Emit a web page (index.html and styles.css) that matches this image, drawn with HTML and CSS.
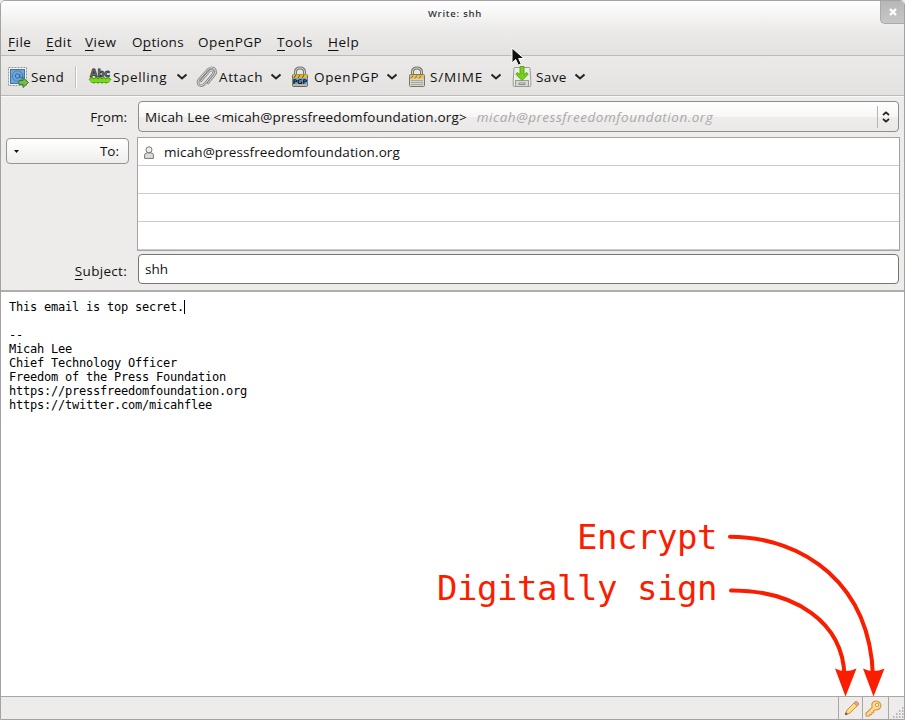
FILE: index.html
```html
<!DOCTYPE html>
<html lang="en">
<head>
<meta charset="utf-8">
<title>Write: shh</title>
<link rel="stylesheet" href="styles.css">
</head>
<body>
<div class="window">
  <header class="chrome">
    <div class="titlebar">
      <span class="title">Write: shh</span>
      <button class="close" aria-label="Close"><svg width="8" height="8" viewBox="0 0 8 8"><path d="M1 1l6 6M7 1l-6 6" stroke="#fff" stroke-width="2.4"/></svg></button>
    </div>
    <nav class="menubar">
      <span class="m-file"><u>F</u>ile</span>
      <span class="m-edit"><u>E</u>dit</span>
      <span class="m-view"><u>V</u>iew</span>
      <span class="m-options">O<u>p</u>tions</span>
      <span class="m-pgp">Ope<u>n</u>PGP</span>
      <span class="m-tools"><u>T</u>ools</span>
      <span class="m-help"><u>H</u>elp</span>
    </nav>
  </header>

  <div class="toolbar">
    <div class="tool t-send">
      <svg class="ico" width="22" height="22" viewBox="0 0 22 22">
        <rect x="1.500" y="1.500" width="18" height="18" fill="#f4f4f1" stroke="#96968f" stroke-dasharray="2 1"/>
        <rect x="3.500" y="3.500" width="14" height="14" fill="#6da5d8" stroke="#3c77b4"/>
        <circle cx="10.500" cy="10" r="5.200" fill="#6fa6da" stroke="#477fb8"/>
        <circle cx="10.500" cy="10" r="2.200" fill="none" stroke="#2f69a6"/>
        <path d="M12.800 8v3.200q1.500 1.500 2.500-.7" fill="none" stroke="#2f69a6"/>
        <path d="M12 14.500h4v-3l5.500 5-5.500 5v-3h-4z" fill="#75bd4c" stroke="#397b25"/>
      </svg>
      <span>Send</span>
    </div>
    <i class="sep"></i>
    <div class="tool t-spell">
      <svg class="ico" width="22" height="22" viewBox="0 0 22 22">
        <text x="1" y="10.500" textLength="20" lengthAdjust="spacingAndGlyphs" class="abc">Abc</text>
        <path d="M1 15l2-1.500 2 1.500 2-1.500 2 1.500 2-1.500 2 1.500 2-1.500 2 1.500 2-1.500 2 1.500" fill="none" stroke="#4e9a06" stroke-width="4.500"/>
        <path d="M1 15l2-1.500 2 1.500 2-1.500 2 1.500 2-1.500 2 1.500 2-1.500 2 1.500 2-1.500 2 1.500" fill="none" stroke="#76d820" stroke-width="2.400"/>
      </svg>
      <span>Spelling</span>
      <svg class="chev" width="12" height="8" viewBox="0 0 12 8"><path d="M1.500 1.500L6 5.500l4.500-4" fill="none" stroke="#222" stroke-width="2"/></svg>
    </div>
    <div class="tool t-attach">
      <svg class="ico" width="22" height="22" viewBox="0 0 22 22">
        <g fill="none" stroke-linecap="round" stroke-linejoin="round">
          <path d="M5 15L13 5.500q2-2 3.700-.6 1.500 1.500 0 3.500L8.500 18q-3 2.800-5.500.8Q.8 16.500 3 13.500L11.500 4q3.500-3.800 6.800-1.500 3 3 .2 6.500L12 17" stroke="#858585" stroke-width="2.400"/>
          <path d="M5 15L13 5.500q2-2 3.700-.6 1.500 1.500 0 3.500L8.500 18q-3 2.800-5.500.8Q.8 16.500 3 13.500L11.500 4q3.500-3.800 6.800-1.500 3 3 .2 6.500L12 17" stroke="#dcdcda" stroke-width="1"/>
        </g>
      </svg>
      <span>Attach</span>
      <svg class="chev" width="12" height="8" viewBox="0 0 12 8"><path d="M1.500 1.500L6 5.500l4.500-4" fill="none" stroke="#222" stroke-width="2"/></svg>
    </div>
    <div class="tool t-pgp">
      <svg class="ico" width="18" height="22" viewBox="0 0 18 22">
        <path d="M4.500 10V6q0-4 4.500-4t4.500 4v4" fill="none" stroke="#777974" stroke-width="3"/>
        <path d="M4.500 10V6q0-4 4.500-4t4.500 4v4" fill="none" stroke="#d0d1cd" stroke-width="1"/>
        <rect x="1.500" y="8.500" width="15" height="12" rx="1" fill="#b9b9a8" stroke="#6a6a60"/>
        <rect x="2" y="8.500" width="14" height="3.500" fill="#eeb932"/>
        <path d="M3 12l2-3M7 12l2-3M11 12l2-3" stroke="#5f4b17"/>
        <rect x="1.500" y="12" width="15" height="6" fill="#6fa8d8"/>
        <text x="1.700" y="17.700" textLength="14.600" lengthAdjust="spacingAndGlyphs" class="pgp">PGP</text>
      </svg>
      <span>OpenPGP</span>
      <svg class="chev" width="12" height="8" viewBox="0 0 12 8"><path d="M1.500 1.500L6 5.500l4.500-4" fill="none" stroke="#222" stroke-width="2"/></svg>
    </div>
    <div class="tool t-smime">
      <svg class="ico" width="18" height="22" viewBox="0 0 18 22">
        <path d="M4.500 10V6q0-4 4.500-4t4.500 4v4" fill="none" stroke="#777974" stroke-width="3"/>
        <path d="M4.500 10V6q0-4 4.500-4t4.500 4v4" fill="none" stroke="#d0d1cd" stroke-width="1"/>
        <rect x="1.500" y="8.500" width="15" height="12" rx="1" fill="#d4d4cc" stroke="#77776c"/>
        <rect x="2" y="9" width="14" height="3.500" fill="#edbd4b"/>
        <path d="M3 12.500l2-3M7 12.500l2-3M11 12.500l2-3" stroke="#8b7132"/>
        <path d="M3 14.500h12M3 16.500h12M3 18.500h12" stroke="#aaaaa0"/>
      </svg>
      <span>S/MIME</span>
      <svg class="chev" width="12" height="8" viewBox="0 0 12 8"><path d="M1.500 1.500L6 5.500l4.500-4" fill="none" stroke="#222" stroke-width="2"/></svg>
    </div>
    <div class="tool t-save">
      <svg class="ico" width="20" height="22" viewBox="0 0 20 22">
        <path d="M3 1.500h14q1 0 1 1l.8 12v5q0 1-1 1H2.200q-1 0-1-1v-5l.8-12q0-1 1-1z" fill="#ecece9" stroke="#999995"/>
        <rect x="3.500" y="14.500" width="13" height="6" fill="#d7d8d4" stroke="#999995"/>
        <path d="M7 18.500v-1.500h6v1.500z" fill="#fff" stroke="#888a85"/>
        <path d="M8 .5h4v8l2.800-2 1.200 2-6 6-6-6 1.200-2L8 8.500z" fill="#73d216" stroke="#4e9a06" stroke-width=".8"/>
      </svg>
      <span>Save</span>
      <svg class="chev" width="12" height="8" viewBox="0 0 12 8"><path d="M1.500 1.500L6 5.500l4.500-4" fill="none" stroke="#222" stroke-width="2"/></svg>
    </div>
  </div>

  <section class="headers">
    <label class="lbl l-from">F<u>r</u>om:</label>
    <div class="combo">
      <span class="identity">Micah Lee &lt;micah@pressfreedomfoundation.org&gt;</span>
      <em>micah@pressfreedomfoundation.org</em>
      <span class="spin"><svg width="8" height="12" viewBox="0 0 8 12"><path d="M1 4l3-2.700L7 4M1 8l3 2.700L7 8" fill="none" stroke="#222" stroke-width="1.700"/></svg></span>
    </div>
    <button class="to"><svg width="5" height="3" viewBox="0 0 5 3"><path d="M0 0h5L2.500 3z" fill="#111"/></svg><span>To:</span></button>
    <div class="recipients">
      <div class="row">
        <svg width="10" height="13" viewBox="0 0 10 13"><path d="M.6 12.400V9Q.6 7.300 3 6.800h4q2.400.5 2.400 2.200v3.400z" fill="#deded9" stroke="#777"/><circle cx="5" cy="3.800" r="3" fill="#eeeeea" stroke="#777"/></svg>
        <span>micah@pressfreedomfoundation.org</span>
      </div>
      <div class="row"></div>
      <div class="row"></div>
      <div class="row"></div>
    </div>
    <label class="lbl l-subject"><u>S</u>ubject:</label>
    <div class="subject"><span>shh</span></div>
  </section>

  <main class="editor"><pre>This email is top secret.<i class="caret"></i>

--
Micah Lee
Chief Technology Officer
Freedom of the Press Foundation
https://pressfreedomfoundation.org
https://twitter.com/micahflee</pre></main>

  <footer class="status">
    <span class="cell"><svg width="16" height="16" viewBox="0 0 16 16"><path d="M1.500 14.500l1.300-4.300L11 2q1.200-1 2.700.4T14 5.200L5.700 13.300z" fill="#fbd77c" stroke="#d2923c"/><path d="M3.800 11.500L12 3.500" stroke="#fff0b5"/><path d="M11 2q1.200-1 2.700.4T14 5.200l-1 1L10 3z" fill="#e5a78a" stroke="#b98464" stroke-width=".7"/><path d="M1 15l.8-2.800 2 2z" fill="#55402c"/></svg></span>
    <span class="cell key"><svg width="17" height="17" viewBox="0 0 17 17"><path d="M7.300 7.200Q6 3.800 8.200 2q2.700-2 5.800 0 2.800 2.500 1.400 5.600-2 3-5.400 2.200L8.500 11.200l.2 1.300-1.800.2-.2 1.700-1.800.2-.5 1.300-3 .3-.6-2.700z" fill="#fbdd90" stroke="#dc9144" stroke-width="1.100"/><circle cx="12" cy="5" r="1.600" fill="#fff" stroke="#dc9144"/></svg></span>
    <span class="grip"><svg width="12" height="12" viewBox="0 0 12 12"><path d="M10 1h1.500M7 4h1.500M10 4h1.500M4 7h1.500M7 7h1.500M10 7h1.500M1 10h1.500M4 10h1.500M7 10h1.500M10 10h1.500" stroke="#a5a4a2" stroke-width="1.500"/></svg></span>
  </footer>

  <div class="note n-encrypt">Encrypt</div>
  <div class="note n-sign">Digitally sign</div>
  <svg class="arrows" width="185" height="180" viewBox="720 520 185 180">
    <g fill="none" stroke="#f91e00" stroke-width="4" stroke-linecap="round">
      <path d="M730 536.700C805 537 870 585 873 676"/>
      <path d="M731 590.500C795 590 843 622 844.500 676"/>
    </g>
    <path d="M835 668.500q10.500 5 21.500 0L845.500 696.500z M863 668.500q10.500 5 21.500 0L873.500 696.500z" fill="#f91e00"/>
  </svg>
  <svg class="pointer" width="14" height="20" viewBox="0 0 14 20"><path d="M1 1v15l3.700-3.500 2.500 5.700 3-1.300-2.500-5.400H13z" fill="#111" stroke="#fff" stroke-width="1"/></svg>
</div>
</body>
</html>
```

FILE: styles.css
```css
* { box-sizing: border-box; }
body {
  margin: 0;
  font: 13.5px/20px "Open Sans", "Noto Sans", sans-serif;
  color: #111;
  background: #edecea;
}
u { text-decoration: underline; text-underline-offset: 3px; text-decoration-thickness: 1px; text-decoration-skip-ink: none; }
button { font: inherit; color: inherit; padding: 0; }
svg { display: block; flex: none; }
.window {
  position: relative;
  display: flex;
  flex-direction: column;
  width: 905px;
  height: 720px;
  border: 1px solid #a3a3a3;
  border-radius: 5px 5px 0 0;
  overflow: hidden;
  background: #edecea;
}
.chrome {
  height: 55px;
  flex: none;
  border-bottom: 1px solid #bdbbb8;
  background: linear-gradient(#fff, #ecebea 28px, #e3e2e0);
}
.titlebar { height: 28px; display: flex; justify-content: center; position: relative; padding-left: 5px; }
.title { font: 600 9.5px/25px "Open Sans", sans-serif; color: #34383c; letter-spacing: .75px; }
.close {
  position: absolute; right: 0; top: 0;
  width: 24px; height: 23px;
  display: grid; place-items: center;
  border: solid #aaa; border-width: 0 0 1px 1px;
  border-radius: 0 0 0 5px;
  background: linear-gradient(#b7b7b7, #c7c7c7);
}
.menubar { display: flex; padding-left: 7px; line-height: 27px; white-space: nowrap; letter-spacing: .5px; }
.menubar span { flex: none; }
.m-file { width: 38px; } .m-edit { width: 39px; } .m-view { width: 47px; }
.m-options { width: 66px; letter-spacing: .3px; } .m-pgp { width: 79px; } .m-tools { width: 51px; }

.toolbar {
  display: flex; align-items: center;
  height: 40px; flex: none;
  padding: 2px 0 0 6px;
  border-bottom: 1px solid #bcbab7;
  background: linear-gradient(#ebeae8, #e3e2e0);
}
.tool { display: flex; align-items: center; flex: none; white-space: nowrap; letter-spacing: .65px; }
.ico { margin-right: 2px; overflow: visible; }
.tool .chev { margin-left: auto; }
.t-send { width: 68px; letter-spacing: .4px; }
.sep { width: 2px; height: 22px; margin-right: 12px; border-left: 1px solid #c4c2bf; border-right: 1px solid #fff; }
.t-spell { width: 99px; margin-right: 8px; }
.t-attach { width: 86px; margin-right: 9px; letter-spacing: .6px; }
.t-attach .ico { margin-right: 1px; }
.t-pgp { width: 107px; margin-right: 10px; }
.t-smime { width: 94px; margin-right: 10px; letter-spacing: .85px; }
.t-save { width: 74px; letter-spacing: .4px; }
.t-pgp .ico { margin-right: 5px; }
.t-smime .ico, .t-save .ico { margin-right: 4px; }
.abc { font: bold 11px "DejaVu Sans", sans-serif; fill: #777b78; stroke: #2e3436; stroke-width: .8px; letter-spacing: 0; }
.pgp { font: bold 6.5px "DejaVu Sans", sans-serif; fill: #111; letter-spacing: 0; }

.headers {
  display: grid;
  grid-template-columns: 123px 763px;
  grid-template-rows: 31px 114px 30px;
  column-gap: 8px;
  row-gap: 4px;
  height: 196px; flex: none;
  padding: 5px 4px 0 5px;
  border-top: 1px solid #fafaf9;
  border-bottom: 2px solid #b0adab;
}
.lbl { justify-self: end; margin-right: 2px; line-height: 31px; }
.l-subject { line-height: 32px; letter-spacing: .3px; }
.combo {
  display: flex; align-items: center;
  margin: -1px 1px 1px;
  height: 31px;
  border: 1px solid #8f8d8a;
  border-radius: 4px;
  background: linear-gradient(#fff, #f7f7f6 50%, #eeedec 51%, #eae9e7);
  padding-left: 6px;
  white-space: nowrap;
}
.identity { letter-spacing: .15px; }
.combo em { color: #a9a9a8; margin-left: 10px; letter-spacing: .54px; }
.spin { margin-left: auto; width: 21px; height: 22px; border-left: 1px solid #b8b6b3; display: flex; align-items: center; padding-left: 4px; }
.to {
  display: flex; align-items: center; justify-content: space-between;
  height: 26px; margin-top: 1px;
  padding: 0 9px 0 7px;
  border: 1px solid #969491; border-radius: 4px;
  background: linear-gradient(#fff, #f7f7f6 50%, #eeedec);
}
.recipients { border: 1px solid #a5a3a0; background: #fff; }
.row { height: 28px; border-bottom: 1px solid #c8c7f2; display: flex; align-items: center; padding: 1px 0 0 6px; gap: 10px; letter-spacing: .1px; }
.subject { height: 30px; margin: -1px 1px 0; padding-left: 6px; line-height: 29px; border: 1px solid #777572; border-radius: 4px; background: #fff; }

.editor { flex: 1; background: #fff; padding: 8px; }
.editor pre { margin: 0; font: 12px/14px "DejaVu Sans Mono", monospace; letter-spacing: -.224px; color: #000; }
.caret { display: inline-block; width: 1px; height: 14px; background: #000; vertical-align: top; }

.status { display: flex; justify-content: flex-end; height: 23px; flex: none; border-top: 1px solid #a9a7a5; background: #edecea; }
.cell { width: 24px; border-left: 1px solid #aaa8a6; display: grid; place-items: center; padding-left: 2px; }
.key { width: 27px; border-right: 1px solid #aaa8a6; place-items: center start; }
.grip { width: 15px; display: flex; align-items: flex-end; justify-content: flex-end; }

/* annotation layer over the window */
.note { position: absolute; right: 187px; font: 34px/40px "DejaVu Sans Mono", monospace; letter-spacing: -.47px; color: #f91e00; white-space: nowrap; }
.n-encrypt { top: 516px; }
.n-sign { top: 567px; }
.arrows { position: absolute; left: 719px; top: 519px; }
.pointer { position: absolute; left: 510px; top: 46px; }
```
